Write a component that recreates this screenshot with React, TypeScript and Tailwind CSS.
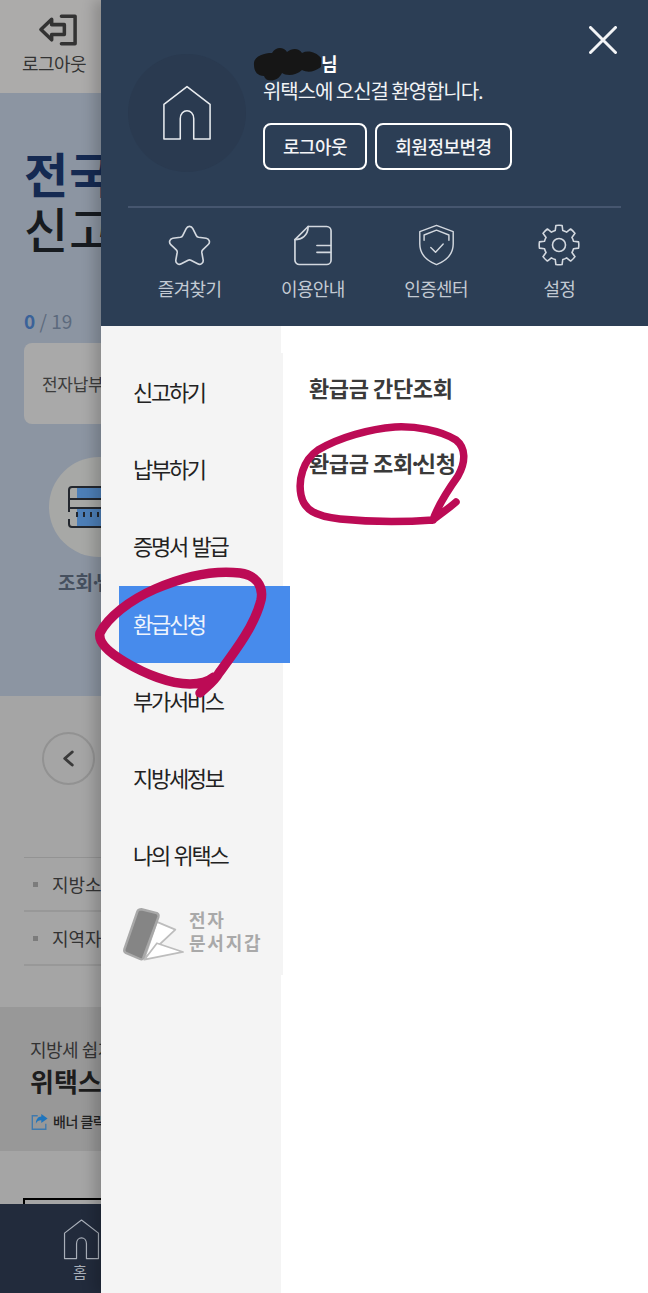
import React from "react";

const font = { fontFamily: '"Noto Sans CJK KR", "Noto Sans", sans-serif' };

function HomeIcon({ className, sw = 1.6 }: { className: string; sw?: number }) {
  return (
    <svg viewBox="0 0 52 58" className={className} fill="none" stroke="currentColor" strokeWidth={sw} strokeLinejoin="round">
      <path d="M2 20 L26 1.5 L50 20 V56 H33 V35 C33 24 19 24 19 35 V56 H2 Z" />
    </svg>
  );
}

function Star() {
  return (
    <svg viewBox="0 0 44 42" className="w-[43px] h-[41px]" fill="none" stroke="currentColor" strokeWidth="1.7" strokeLinejoin="round">
      <path d="M18.6 3.6c1.5-3 5.3-3 6.8 0l3.6 7.2c.5 1 1.3 1.5 2.3 1.7l7.8 1.1c3.2.5 4.4 4.2 2.1 6.4l-5.7 5.4c-.7.7-1 1.700-.9 2.700l1.400 7.800c.5 3.100-2.800 5.400-5.600 3.900l-7-3.700c-.9-.5-1.900-.5-2.800 0l-7 3.700c-2.800 1.500-6.100-.8-5.600-3.900l1.400-7.800c.1-1-.2-2-.9-2.700l-5.700-5.400c-2.300-2.200-1.100-5.900 2.100-6.400l7.800-1.100c1-.2 1.800-.7 2.300-1.700z" />
    </svg>
  );
}

function Doc() {
  return (
    <svg viewBox="0 0 40 42" className="w-[40px] h-[41px]" fill="none" stroke="currentColor" strokeWidth="1.7" strokeLinejoin="round" strokeLinecap="round">
      <path d="M15 1.500H34a4.500 4.500 0 0 1 4.500 4.500V36a4.500 4.500 0 0 1-4.500 4.500H6A4.500 4.500 0 0 1 1.500 36V15C8 15 15 11 15 1.500Z" />
      <path d="M1.500 15 L15 1.500" />
      <path d="M24 21H38M24 28H38" />
    </svg>
  );
}

function Shield() {
  return (
    <svg viewBox="0 0 38 44" className="w-[37px] h-[42px]" fill="none" stroke="currentColor" strokeWidth="1.5" strokeLinejoin="round" strokeLinecap="round">
      <path d="M19 1.500 L36.500 8V21C36.500 32 28 39 19 42.500 10 39 1.500 32 1.500 21V8Z" />
      <path d="M6 17V11.500L19 6.500 32 11.500V17" />
      <path d="M13 24.500 L18 29.500 L26 21" />
    </svg>
  );
}

function Gear() {
  const pts: string[] = [];
  const c = 21;
  const ang = (d: number) => (d * Math.PI) / 180;
  for (let i = 0; i < 8; i++) {
    const a = i * 45 - 90;
    const p = (r: number, d: number) =>
      `${(c + r * Math.cos(ang(a + d))).toFixed(2)} ${(c + r * Math.sin(ang(a + d))).toFixed(2)}`;
    pts.push(
      `${i === 0 ? "M" : "L"}${p(15, -14.5)} L${p(19.800, -9)} A19.800 19.800 0 0 1 ${p(19.800, 9)} L${p(15, 14.500)} A15 15 0 0 1 ${p(15, 30.500)}`
    );
  }
  return (
    <svg viewBox="0 0 42 42" className="w-[42px] h-[42px]" fill="none" stroke="currentColor" strokeWidth="1.600" strokeLinejoin="round">
      <path d={pts.join(" ") + "Z"} />
      <circle cx="21" cy="21" r="6.500" />
    </svg>
  );
}

function Background() {
  return (
    <div className="w-[101px] shrink-0 h-[1293px] overflow-hidden relative z-0">
      <div className="w-[648px]">
        <div className="h-[93px] w-[108px] bg-[#acabaa] flex flex-col items-center pt-[13px] text-[#333]">
          <svg viewBox="0 0 42 34" className="w-[41px] h-[34px] ml-[8px]" fill="none" stroke="currentColor" strokeWidth="3.6" strokeLinejoin="round" strokeLinecap="round">
            <path d="M24 3H38V31H24" />
            <path d="M14 6 L3 16.500 L14 27 V21.500 H27 V11.500 H14Z" />
          </svg>
          <span className="text-[18px] leading-[22px] mt-[5px] whitespace-nowrap tracking-[-0.6px]">로그아웃</span>
        </div>
        <div className="h-[603px] bg-[#8c95a2] pl-[24px] pt-[52px]">
          <div className="text-[48px] leading-[55px] whitespace-nowrap font-bold text-[#152a52] tracking-[1px]">전국 어디서나</div>
          <div className="text-[48px] leading-[55px] whitespace-nowrap font-medium text-[#171b20] tracking-[1px]">신고 납부</div>
          <div className="mt-[55px] text-[19px] leading-[22px] text-[#5c6a7d]">
            <span className="font-bold text-[#3a6299]">0</span> / 19
          </div>
          <div className="mt-[11px] w-[300px] h-[81px] rounded-[8px] bg-[#a9a9a9] pl-[18px] flex items-center text-[17px] text-[#3c3c3c] whitespace-nowrap tracking-[-0.3px]">전자납부번호</div>
          <div className="mt-[33px] ml-[25px] w-[100px] h-[100px] rounded-full bg-[#a7a8a6] flex items-center pl-[18px]">
            <svg viewBox="0 0 52 44" className="w-[52px] h-[44px] shrink-0" fill="none" stroke="#23272e" strokeWidth="2">
              <rect x="10" y="2" width="40" height="12" fill="#4d7fb8" stroke="none" />
              <rect x="10" y="23" width="40" height="19" fill="#4d7fb8" stroke="none" />
              <path d="M52 2H5a3 3 0 0 0-3 3V27M2 34V39a3 3 0 0 0 3 3H52M2 14H52M2 23H52" />
              <path d="M10 27V32M17 27V32M24 27V32M31 27V32" />
            </svg>
          </div>
          <div className="mt-[13px] ml-[34px] text-[19px] leading-[24px] font-bold text-[#46505f] whitespace-nowrap">조회<span className="ml-[-3px] tracking-[-5px]">·</span>납부</div>
        </div>
        <div className="h-[311px] bg-[#a5a5a5] pl-[24px] pt-[36px]">
          <div className="ml-[18px] w-[53px] h-[53px] rounded-full border-2 border-[#929292] flex items-center justify-center">
            <svg viewBox="0 0 14 18" className="w-[13px] h-[17px]" fill="none" stroke="#3a3a3a" strokeWidth="3.2" strokeLinecap="round" strokeLinejoin="round">
              <path d="M11 2 L3 9 L11 16" />
            </svg>
          </div>
          <div className="mt-[72px] w-[300px] border-t border-[#939393]">
            {["지방소득세", "지역자원시설세"].map((t) => (
              <div key={t} className="h-[54px] border-b-2 border-[#989898] flex items-center pl-[9px] gap-[14px] text-[18px] text-[#333] whitespace-nowrap">
                <span className="w-[5px] h-[5px] bg-[#7c7c7c]" />
                {t}
              </div>
            ))}
          </div>
        </div>
        <div className="h-[144px] bg-[#989898] pl-[30px] pt-[28px]">
          <div className="text-[18px] leading-[28px] text-[#333] whitespace-nowrap tracking-[-0.5px]">지방세 쉽게</div>
          <div className="text-[26px] leading-[36px] font-bold text-[#1d1d1d] whitespace-nowrap">위택스로</div>
          <div className="mt-[12px] flex items-center gap-[4px] text-[14px] font-medium text-[#222] whitespace-nowrap tracking-[-0.5px]">
            <svg viewBox="0 0 20 20" className="w-[19px] h-[18px] shrink-0" fill="none">
              <path d="M8 3H2V18H17V12" stroke="#3f79ad" strokeWidth="1.5" />
              <path d="M12 1 L19 6 L12 11 V8 C9 8 7 9 6 12 C6 8 8 4 12 4Z" fill="#1f75bd" />
            </svg>
            배너 클릭
          </div>
        </div>
        <div className="h-[53px] bg-[#a5a5a5] pl-[23px] pt-[47px]">
          <div className="w-[300px] h-[20px] border-2 border-black" />
        </div>
        <div className="h-[89px] bg-[#222b3c] pl-[63px] pt-[15px] text-[#a9afb9]">
          <HomeIcon className="w-[37px] h-[41px]" sw={1.700} />
          <div className="text-[15px] leading-[20px] mt-[2px] ml-[10px]">홈</div>
        </div>
      </div>
    </div>
  );
}

const menu = ["신고하기", "납부하기", "증명서 발급", "환급신청", "부가서비스", "지방세정보", "나의 위택스"];

function Drawer() {
  return (
    <div className="flex-1 flex flex-col relative z-10 shadow-[-7px_0_12px_rgba(0,0,0,0.18)]">
      <div className="h-[326px] bg-[#2c3e55] px-[27px] relative shrink-0">
        <svg viewBox="0 0 28 28" className="absolute right-[31px] top-[26px] w-[28px] h-[28px] text-[#f3f4f6]" fill="none" stroke="currentColor" strokeWidth="3" strokeLinecap="round">
          <path d="M1.500 1.500 L26.500 26.500 M26.500 1.500 L1.500 26.500" />
        </svg>
        <div className="flex h-[208px] pt-[54px] border-b-2 border-[#46566f]">
          <div className="w-[118px] h-[118px] rounded-full bg-[#2a3a50] flex items-center justify-center text-[#e8ebef] shrink-0">
            <HomeIcon className="w-[50px] h-[56px]" />
          </div>
          <div className="ml-[17px] relative">
            <div className="h-[24px] mt-[-3px] pl-[58px] text-[18px] leading-[24px] font-bold text-white">님</div>
            <svg viewBox="0 0 70 40" className="absolute left-[-11px] top-[-9px] w-[70px] h-[40px]">
              <path d="M2 20C1 11 12 8 20 8C24 1 32 2 35 7C40 3 47 3 50 8C56 5 64 7 69 13L69 22C62 27 56 28 50 25C44 31 34 31 30 28C26 37 14 38 12 31C6 31 2 27 2 20Z" fill="#161616" />
            </svg>
            <div className="mt-[3px] text-[20px] leading-[26px] text-[#f1f3f5] whitespace-nowrap tracking-[-1.050px]">위택스에 오신걸 환영합니다.</div>
            <div className="flex gap-[8px] mt-[19px]">
              <div className="w-[104px] h-[47px] rounded-[8px] border-2 border-white flex items-center justify-center text-[18px] font-medium text-[#f4f5f7] tracking-[-0.5px]">로그아웃</div>
              <div className="w-[137px] h-[47px] rounded-[8px] border-2 border-white flex items-center justify-center text-[18px] font-medium text-[#f4f5f7] tracking-[-0.5px]">회원정보변경</div>
            </div>
          </div>
        </div>
        <div className="grid grid-cols-4 w-[493px] pt-[15px] text-[#d3d8df]">
          {[
            ["즐겨찾기", <Star key="s" />],
            ["이용안내", <Doc key="d" />],
            ["인증센터", <Shield key="h" />],
            ["설정", <Gear key="g" />],
          ].map(([label, icon]) => (
            <div key={label as string} className="flex flex-col items-center">
              <div className="h-[44px] flex items-center justify-center">{icon}</div>
              <div className="mt-[9px] text-[18px] leading-[24px] text-[#c3cad3] tracking-[-0.6px]">{label}</div>
            </div>
          ))}
        </div>
      </div>
      <div className="flex-1 flex bg-white">
        <div className="w-[180px] shrink-0 bg-[#f4f4f4]">
          <div className="w-[182px] mt-[27px] h-[622px] bg-[#f4f4f4] pt-[1px] relative z-10">
            {menu.map((m, i) => (
              <div
                key={m}
                className={
                  i === 3
                    ? "ml-[18px] w-[171px] h-[77.300px] pl-[14px] pb-[3px] flex items-center bg-[#478bec] text-[#eef4fd] text-[22px] tracking-[-2.300px] [word-spacing:2px] whitespace-nowrap"
                    : "ml-[18px] w-[171px] h-[77.300px] pl-[14px] pb-[3px] flex items-center text-[#222] text-[22px] tracking-[-2.300px] [word-spacing:2px] whitespace-nowrap"
                }
              >
                {m}
              </div>
            ))}
            <div className="flex items-start pl-[21px] mt-[12px]">
              <svg viewBox="0 0 66 56" className="w-[64px] h-[55px] shrink-0">
                <path d="M36 15 L55 23 L23 53Z" fill="#fff" stroke="#bdbdbd" strokeWidth="1.800" strokeLinejoin="round" />
                <path d="M36 37 L63 46 L23 54Z" fill="#fff" stroke="#bdbdbd" strokeWidth="1.800" strokeLinejoin="round" />
                <path d="M20 2 L36 6 C38 7 38 8 37.500 10 L22 52 C21 54 20 54 18 53 L4 47 C2 46 2 45 2.500 43 L16 4 C17 2 18 2 20 2Z" fill="#858585" stroke="#a8a8a8" strokeWidth="2.500" strokeLinejoin="round" />
              </svg>
              <div className="ml-[3px] mt-[1px] text-[18px] leading-[23px] font-bold text-[#a9a9a9] tracking-[1.800px] whitespace-nowrap">
                전자
                <br />
                문서지갑
              </div>
            </div>
          </div>
        </div>
        <div className="flex-1 pl-[28px] pt-[45px] text-[#3a3a3a] text-[22px] font-bold tracking-[-0.4px]">
          <div className="leading-[32px]">환급금 간단조회</div>
          <div className="leading-[32px] mt-[43px] whitespace-nowrap">환급금 조회<span className="ml-[-4px] tracking-[-6px]">·</span>신청</div>
        </div>
      </div>
    </div>
  );
}

export default function App() {
  return (
    <div className="relative w-[648px] h-[1293px] overflow-hidden flex" style={font}>
      <Background />
      <Drawer />
      <svg viewBox="0 0 648 1293" className="absolute inset-0 w-[648px] h-[1293px] pointer-events-none z-20" fill="none" stroke="#bc0b55" strokeLinecap="round" strokeLinejoin="round">
        <path strokeWidth="9.500" d="M200 693C207 686 214 682 219 673C236 650 255 625 261 600C264 585 255 575 240 573C215 570 185 576 155 589C130 600 108 617 100 633C98 642 108 652 125 662C145 674 170 684 190 684C200 684 208 682 214 677" />
        <path strokeWidth="7.500" d="M456 502C448 509 440 514 433 520M433 520C438 505 448 490 458 476C466 462 466 448 456 440C440 430 415 426 395 427C370 429 340 437 318 450C303 460 298 480 301 495C304 510 315 516 340 519C370 522 405 522 433 520" />
      </svg>
    </div>
  );
}
